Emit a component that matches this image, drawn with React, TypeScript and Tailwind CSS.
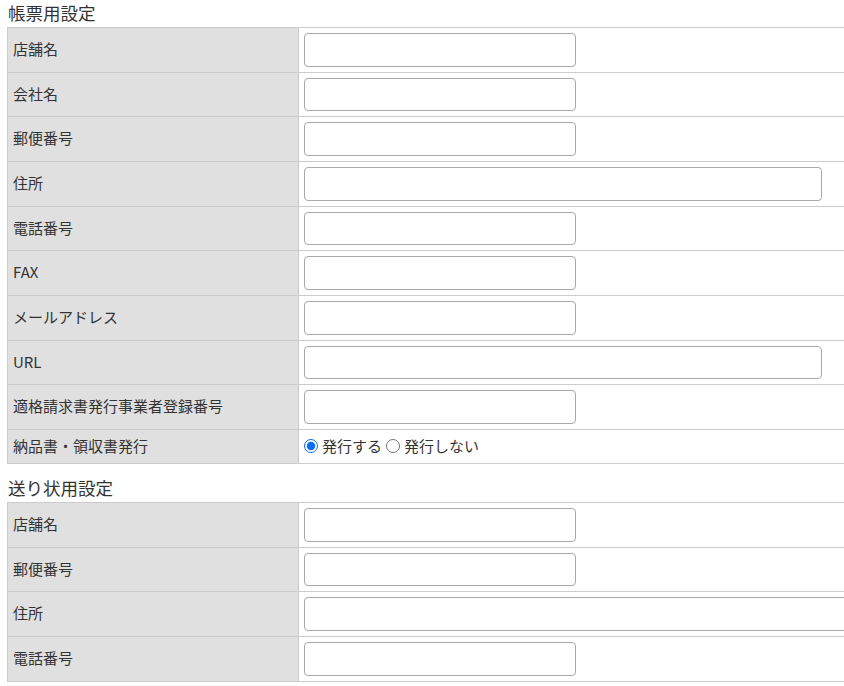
import React from 'react'

type Row = { label: string; wide?: boolean; wider?: boolean }

const invoiceRows: Row[] = [
  { label: '店舗名' },
  { label: '会社名' },
  { label: '郵便番号' },
  { label: '住所', wide: true },
  { label: '電話番号' },
  { label: 'FAX' },
  { label: 'メールアドレス' },
  { label: 'URL', wide: true },
  { label: '適格請求書発行事業者登録番号' },
]

const shippingRows: Row[] = [
  { label: '店舗名' },
  { label: '郵便番号' },
  { label: '住所', wider: true },
  { label: '電話番号' },
]

const FieldRow = ({ row }: { row: Row }) => (
  <div className="flex border-b border-[#cbcbcb]">
    <div className="w-[291px] shrink-0 bg-[#e0e0e0] border-r border-[#cbcbcb] px-[5px] pt-[10px] text-[15px] text-[#333]">
      {row.label}
    </div>
    <div className="flex-1 py-[5px] pl-[5px]">
      <input
        type="text"
        className={`block h-[33.67px] rounded-[4px] border border-[#aaa] bg-white ${row.wide ? 'w-[518px]' : row.wider ? 'w-[600px]' : 'w-[272px]'}`}
      />
    </div>
  </div>
)

export default function App() {
  return (
    <div className="w-[844px] h-[686px] overflow-hidden bg-white text-[#333]" style={{ fontFamily: '"Noto Sans CJK JP", "Noto Sans", sans-serif' }}>
      <div className="pl-[8px] text-[17.5px] leading-[26px] h-[27px]">帳票用設定</div>
      <div className="ml-[7px] w-[900px] border-t border-l border-[#cbcbcb]">
        {invoiceRows.map((r) => (
          <FieldRow key={r.label} row={r} />
        ))}
        <div className="flex border-b border-[#cbcbcb]">
          <div className="w-[291px] shrink-0 bg-[#e0e0e0] border-r border-[#cbcbcb] px-[5px] h-[33px] flex items-center text-[15px] text-[#333]">
            納品書・領収書発行
          </div>
          <div className="flex-1 flex items-center pl-[5px] text-[15px]">
            <label className="flex items-center">
              <input type="radio" name="issue" defaultChecked className="w-[14px] h-[14px] mr-[4px] accent-[#0b6cf5]" />
              発行する
            </label>
            <label className="flex items-center ml-[4px]">
              <input type="radio" name="issue" className="w-[14px] h-[14px] mr-[4px]" />
              発行しない
            </label>
          </div>
        </div>
      </div>
      <div className="pl-[8px] mt-[11px] text-[17.5px] leading-[26px] h-[27px]">送り状用設定</div>
      <div className="ml-[7px] w-[900px] border-t border-l border-[#cbcbcb]">
        {shippingRows.map((r) => (
          <FieldRow key={r.label} row={r} />
        ))}
      </div>
    </div>
  )
}
